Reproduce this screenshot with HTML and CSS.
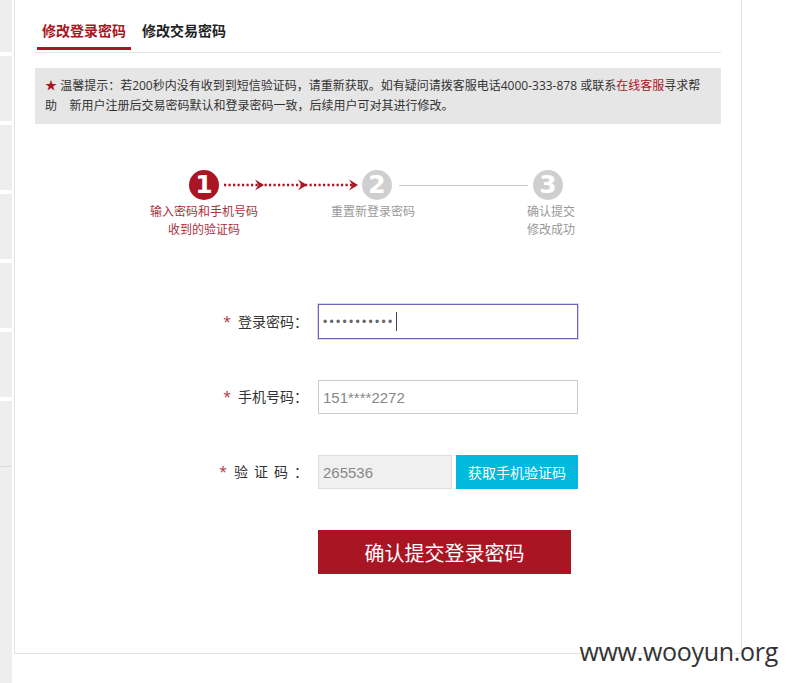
FILE: index.html
```html
<!DOCTYPE html>
<html lang="zh-CN">
<head>
<meta charset="utf-8">
<title>修改登录密码</title>
<link rel="stylesheet" href="styles.css">
</head>
<body>
<div class="page">
  <aside class="side">
    <div class="side-item first"></div>
    <div class="side-item"></div>
    <div class="side-item"></div>
    <div class="side-item"></div>
    <div class="side-item"></div>
    <div class="side-item"></div>
    <div class="side-item"></div>
    <div class="side-rest"></div>
  </aside>
  <main class="panel">
    <nav class="tabs">
      <div class="tab active">修改登录密码</div>
      <div class="tab">修改交易密码</div>
    </nav>
    <div class="tip"><span class="star">★</span> 温馨提示：若200秒内没有收到到短信验证码，请重新获取。如有疑问请拨客服电话4000-333-878 或联系<a href="#">在线客服</a>寻求帮助&nbsp;&nbsp;&nbsp;&nbsp;新用户注册后交易密码默认和登录密码一致，后续用户可对其进行修改。</div>

    <div class="steps">
      <div class="step done">
        <div class="circle">1</div>
        <div class="step-label">输入密码和手机号码<br>收到的验证码</div>
      </div>
      <div class="conn">
        <svg width="143" height="30" viewBox="0 0 143 30">
          <line x1="5" y1="15" x2="134" y2="15" stroke="#a91522" stroke-width="2.4" stroke-dasharray="2.2 2.3"/>
          <path d="M36 9.5 L45 15 L36 20.5 L39.5 15 Z" fill="#a91522"/>
          <path d="M79 9.5 L88 15 L79 20.5 L82.5 15 Z" fill="#a91522"/>
          <path d="M130 9.5 L139 15 L130 20.5 L133.5 15 Z" fill="#a91522"/>
        </svg>
      </div>
      <div class="step second">
        <div class="circle">2</div>
        <div class="step-label">重置新登录密码</div>
      </div>
      <div class="conn">
        <svg width="141" height="30" viewBox="0 0 141 30">
          <line x1="7" y1="15.5" x2="136" y2="15.5" stroke="#cccccc" stroke-width="1"/>
        </svg>
      </div>
      <div class="step third">
        <div class="circle">3</div>
        <div class="step-label">确认提交<br>修改成功</div>
      </div>
    </div>

    <form class="form">
      <div class="row">
        <label class="lbl"><span class="req">*</span>登录密码：</label>
        <div class="field focus"><span class="dots">•••••••••••</span><span class="caret"></span></div>
      </div>
      <div class="row">
        <label class="lbl"><span class="req">*</span>手机号码：</label>
        <div class="field">151****2272</div>
      </div>
      <div class="row">
        <label class="lbl"><span class="req">*</span><span class="spaced">验证码</span>：</label>
        <div class="field code">265536</div>
        <button type="button" class="sms-btn">获取手机验证码</button>
      </div>
      <button type="button" class="submit">确认提交登录密码</button>
    </form>
  </main>
</div>
<div class="watermark">www.wooyun.org</div>
</body>
</html>
```

FILE: styles.css
```css
html, body {
  margin: 0;
  padding: 0;
  background: #fff;
}
body {
  font-family: "Open Sans", "Noto Sans CJK SC", sans-serif;
  color: #333;
  overflow: hidden;
  position: relative;
  height: 683px;
}
.page {
  display: flex;
  height: 683px;
}
.side {
  width: 12px;
  flex: none;
  display: flex;
  flex-direction: column;
  gap: 4px;
}
.side-item {
  height: 65px;
  background: #eeeeee;
}
.side-item.first {
  height: 52px;
}
.side-rest {
  flex: 1;
  margin-top: -4px;
  background: #eeeeee;
  border-top: 1px solid #dadada;
}
.panel {
  margin-left: 2px;
  width: 728px;
  height: 654px;
  box-sizing: border-box;
  border: 1px solid #e3e3e3;
  border-top: none;
  padding: 0 20px;
}
.tabs {
  display: flex;
  height: 52px;
  border-bottom: 1px solid #e6e6e6;
  padding-left: 2px;
}
.tab {
  padding: 21px 5px 0;
  height: 26px;
  line-height: 20px;
  font-size: 14px;
  font-weight: bold;
  color: #222;
  margin-right: 6px;
  border-bottom: 3px solid transparent;
}
.tab.active {
  color: #a91522;
  border-bottom-color: #a91522;
}
.tip {
  margin-top: 15px;
  background: #e6e6e6;
  padding: 8px 10px;
  font-size: 12px;
  line-height: 20px;
  color: #333;
}
.tip .star {
  color: #a91522;
}
.tip a {
  color: #a91522;
  text-decoration: none;
}
.steps {
  display: flex;
  margin-top: 46px;
  margin-left: 154px;
}
.step {
  width: 30px;
  display: flex;
  flex-direction: column;
  align-items: center;
}
.circle {
  width: 30px;
  height: 30px;
  border-radius: 50%;
  background: #cfcfcf;
  color: #fff;
  font: bold 25px/30px "DejaVu Sans", sans-serif;
  text-align: center;
}
.step.done .circle {
  background: #a91522;
}
.step-label {
  margin-top: 3px;
  white-space: nowrap;
  font-size: 12px;
  line-height: 18px;
  color: #999;
  text-align: center;
}
.step.done .step-label {
  color: #a8333b;
}
.step.second .step-label {
  margin-right: 8px;
}
.step.third .step-label {
  margin-left: 6px;
}
.conn {
  height: 30px;
  display: flex;
}
.form {
  margin: 65px 0 0;
}
.row {
  display: flex;
  align-items: center;
  margin-bottom: 41px;
}
.lbl {
  width: 273px;
  padding-right: 10px;
  text-align: right;
  font-size: 14px;
  line-height: 20px;
  color: #333;
  white-space: nowrap;
}
.req {
  color: #b5323f;
  margin-right: 7px;
}
.spaced {
  letter-spacing: 6px;
}
.field {
  width: 260px;
  height: 34px;
  box-sizing: border-box;
  border: 1px solid #cccccc;
  padding: 0 4px;
  display: flex;
  align-items: center;
  font: 15px "Liberation Sans", sans-serif;
  color: #888;
  background: #fff;
}
.field.focus {
  border-color: #7560b2;
  box-shadow: 0 0 0 1px rgba(150, 170, 235, 0.45);
  height: 35px;
}
.dots {
  font: 12px "Liberation Sans", sans-serif;
  letter-spacing: 2.3px;
  color: #666;
}
.caret {
  width: 1px;
  height: 19px;
  background: #444;
  margin-left: 1px;
}
.field.code {
  width: 134px;
  background: #f0f0f0;
  border-color: #dddddd;
}
.sms-btn {
  margin-left: 4px;
  width: 122px;
  height: 34px;
  padding: 0;
  border: none;
  background: #00b9dd;
  color: #fff;
  font-family: "Open Sans", "Noto Sans CJK SC", sans-serif;
  font-size: 14px;
}
.submit {
  display: block;
  margin-left: 283px;
  width: 253px;
  height: 44px;
  padding: 0;
  border: none;
  background: #a91522;
  color: #fff;
  font-family: "Open Sans", "Noto Sans CJK SC", sans-serif;
  font-size: 20px;
}
.watermark {
  position: absolute;
  right: 9px;
  top: 636px;
  font: 25px/30px "Open Sans", sans-serif;
  color: #333;
  letter-spacing: -0.3px;
}
```
